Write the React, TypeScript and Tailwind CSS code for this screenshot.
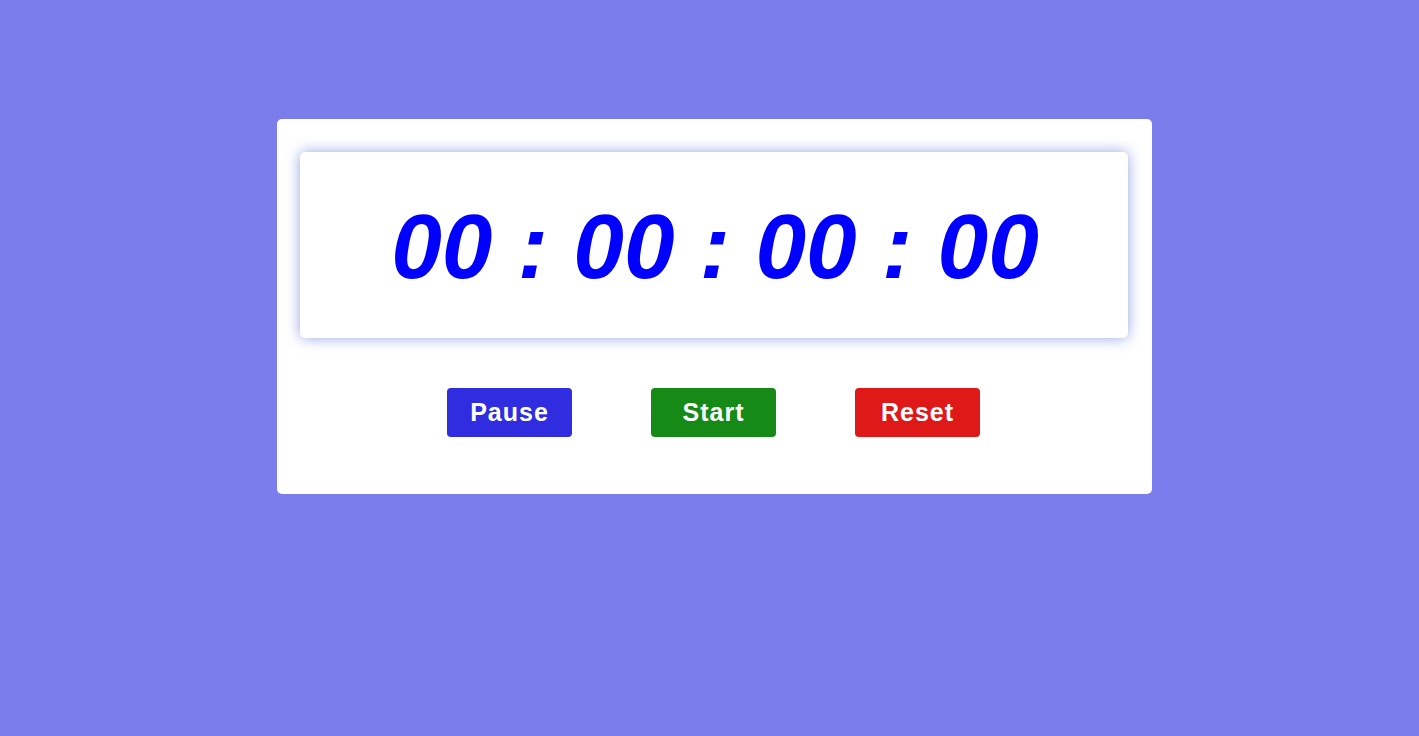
import React from 'react';

const buttons = [
  { label: 'Pause', color: 'bg-[#302ce0]' },
  { label: 'Start', color: 'bg-[#158a16]' },
  { label: 'Reset', color: 'bg-[#df1818]' },
];

export default function App() {
  return (
    <div className="min-h-screen bg-[#7b7ded] flex justify-center pl-[10px] pt-[119px] font-['Liberation_Sans',Arial,sans-serif]">
      <div className="w-[875px] h-[375px] bg-white rounded-[5px] pt-[33px] px-[23px]">
        {/* Timer display */}
        <div className="w-[828px] h-[186px] rounded-[5px] bg-white shadow-[0_0_14px_rgba(60,90,210,0.55)] flex items-center justify-center">
          <span className="text-[91px] leading-none font-bold italic text-[#0000ff] pl-[2px] pt-[2px]">
            00 : 00 : 00 : 00
          </span>
        </div>

        {/* Controls */}
        <div className="flex justify-center gap-[79px] mt-[50px] pr-[2px]">
          {buttons.map((b) => (
            <button
              key={b.label}
              className={`${b.color} w-[125px] h-[49px] rounded-[4px] text-white text-[25px] font-bold tracking-[1px]`}
            >
              {b.label}
            </button>
          ))}
        </div>
      </div>
    </div>
  );
}
